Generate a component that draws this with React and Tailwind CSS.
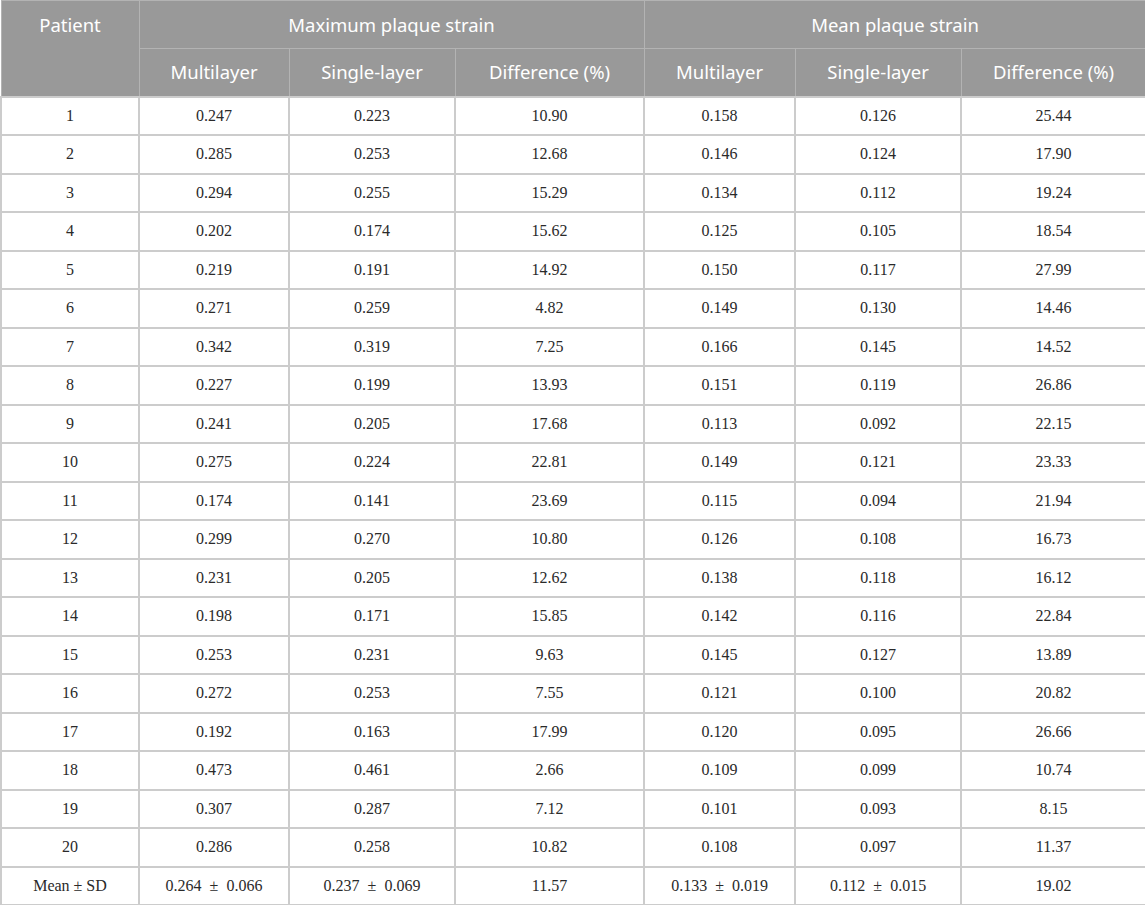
const rows = [
  ["1", "0.247", "0.223", "10.90", "0.158", "0.126", "25.44"],
  ["2", "0.285", "0.253", "12.68", "0.146", "0.124", "17.90"],
  ["3", "0.294", "0.255", "15.29", "0.134", "0.112", "19.24"],
  ["4", "0.202", "0.174", "15.62", "0.125", "0.105", "18.54"],
  ["5", "0.219", "0.191", "14.92", "0.150", "0.117", "27.99"],
  ["6", "0.271", "0.259", "4.82", "0.149", "0.130", "14.46"],
  ["7", "0.342", "0.319", "7.25", "0.166", "0.145", "14.52"],
  ["8", "0.227", "0.199", "13.93", "0.151", "0.119", "26.86"],
  ["9", "0.241", "0.205", "17.68", "0.113", "0.092", "22.15"],
  ["10", "0.275", "0.224", "22.81", "0.149", "0.121", "23.33"],
  ["11", "0.174", "0.141", "23.69", "0.115", "0.094", "21.94"],
  ["12", "0.299", "0.270", "10.80", "0.126", "0.108", "16.73"],
  ["13", "0.231", "0.205", "12.62", "0.138", "0.118", "16.12"],
  ["14", "0.198", "0.171", "15.85", "0.142", "0.116", "22.84"],
  ["15", "0.253", "0.231", "9.63", "0.145", "0.127", "13.89"],
  ["16", "0.272", "0.253", "7.55", "0.121", "0.100", "20.82"],
  ["17", "0.192", "0.163", "17.99", "0.120", "0.095", "26.66"],
  ["18", "0.473", "0.461", "2.66", "0.109", "0.099", "10.74"],
  ["19", "0.307", "0.287", "7.12", "0.101", "0.093", "8.15"],
  ["20", "0.286", "0.258", "10.82", "0.108", "0.097", "11.37"],
  ["Mean ± SD", "0.264\u2002±\u20020.066", "0.237\u2002±\u20020.069", "11.57", "0.133\u2002±\u20020.019", "0.112\u2002±\u20020.015", "19.02"],
];

const subHeads = ["Multilayer", "Single-layer", "Difference (%)", "Multilayer", "Single-layer", "Difference (%)"];

export default function App() {
  return (
    <div className="w-[1145px] h-[905px] bg-white">
      <table className="w-[1145px] table-fixed border-collapse">
        <colgroup>
          <col className="w-[138px]" />
          <col className="w-[150px]" />
          <col className="w-[166px]" />
          <col className="w-[189px]" />
          <col className="w-[151px]" />
          <col className="w-[166px]" />
          <col className="w-[185px]" />
        </colgroup>
        <thead className="bg-[#999999] text-white font-['Noto_Sans',sans-serif] text-[18.5px]">
          <tr className="h-[48px]">
            <th rowSpan={2} className="border border-[#b3b3b3] font-normal align-top pt-[10px]">
              Patient
            </th>
            <th colSpan={3} className="border border-[#b3b3b3] font-normal">
              Maximum plaque strain
            </th>
            <th colSpan={3} className="border border-[#b3b3b3] font-normal">
              Mean plaque strain
            </th>
          </tr>
          <tr className="h-[48px]">
            {subHeads.map((h, i) => (
              <th key={i} className="border border-[#b3b3b3] font-normal">
                {h}
              </th>
            ))}
          </tr>
        </thead>
        <tbody className="font-['Liberation_Serif',serif] text-[16px] text-[#2a2a2a]">
          {rows.map((r, i) => (
            <tr key={i} className="h-[38.5px]">
              {r.map((c, j) => (
                <td key={j} className="border-2 border-[#cccccc] text-center">
                  {c}
                </td>
              ))}
            </tr>
          ))}
        </tbody>
      </table>
    </div>
  );
}
